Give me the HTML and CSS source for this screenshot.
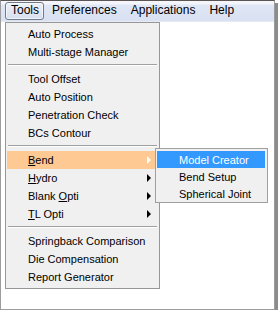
FILE: index.html
```html
<!DOCTYPE html>
<html lang="en">
<head>
  <meta charset="UTF-8" />
  <title>Tools menu</title>
  <link rel="stylesheet" href="styles.css">
</head>
<body>
  <div class="window">
    <div class="menubar">
      <div class="bar-item active">Tools</div>
      <div class="bar-item">Preferences</div>
      <div class="bar-item">Applications</div>
      <div class="bar-item">Help</div>
    </div>

    <div class="menu">
      <div class="item">Auto Process</div>
      <div class="item">Multi-stage Manager</div>
      <div class="sep"></div>
      <div class="item">Tool Offset</div>
      <div class="item">Auto Position</div>
      <div class="item">Penetration Check</div>
      <div class="item">BCs Contour</div>
      <div class="sep"></div>
      <div class="item sub open"><span><u>B</u>end</span><i class="arrow"></i></div>
      <div class="item sub"><span><u>H</u>ydro</span><i class="arrow"></i></div>
      <div class="item sub"><span>Blank <u>O</u>pti</span><i class="arrow"></i></div>
      <div class="item sub"><span><u>T</u>L Opti</span><i class="arrow"></i></div>
      <div class="sep"></div>
      <div class="item">Springback Comparison</div>
      <div class="item">Die Compensation</div>
      <div class="item">Report Generator</div>
    </div>

    <div class="submenu">
      <div class="item selected">Model Creator</div>
      <div class="item">Bend Setup</div>
      <div class="item">Spherical Joint</div>
    </div>
  </div>
</body>
</html>
```

FILE: styles.css
```css
body {
  margin: 0;
  background-color: #ffffff;
  font-family: "Liberation Sans", Arial, sans-serif;
  color: #000;
}
.window {
  position: relative;
  width: 275px;
  height: 310px;
  box-sizing: border-box;
  border: 1px solid #9c9c9c;
  border-top-color: #5b5555;
  background-color: #ffffff;
  box-shadow: 3px 3px 0 #8c8c8c;
}
.menubar {
  display: flex;
  align-items: center;
  gap: 2px;
  height: 20px;
  padding-left: 4px;
  border-bottom: 1px solid #e6eaf3;
  background: linear-gradient(#f5f6fa 0, #f3f5fa 3px, #dfe6f5 4px, #d9e1f2 100%);
  font-size: 12px;
}
.bar-item {
  padding: 1px 5px 2px;
  border: 1px solid transparent;
  border-radius: 3px;
  line-height: 13px;
}
.bar-item.active {
  padding: 1px 4px 2px 5px;
  border-color: #707a8a;
  background: linear-gradient(#eef1f7, #d6deee);
  box-shadow: inset 0 0 0 1px rgba(255, 255, 255, 0.6);
}
.menu,
.submenu {
  position: absolute;
  box-sizing: border-box;
  background-color: #f0f0f0;
  border: 1px solid #979797;
  font-size: 11px;
}
.menu {
  left: 4px;
  top: 21px;
  width: 155px;
  padding: 2px 1px;
}
.submenu {
  left: 154px;
  top: 147px;
  width: 113px;
  padding: 2px 2px 0 1px;
  border-color: #a0a0a0;
}
.item {
  display: flex;
  align-items: center;
  justify-content: space-between;
  height: 18px;
  padding: 0 7px 0 21px;
}
.submenu .item {
  height: 17px;
  padding-left: 22px;
}
.item.open {
  background-color: #ffc994;
}
.item.selected {
  background-color: #3399ff;
  color: #ffffff;
}
.sep {
  height: 9px;
  box-sizing: border-box;
  padding-top: 3px;
}
.sep::before {
  content: "";
  display: block;
  margin: 0 1px;
  border-top: 1px solid #a0a0a0;
  border-bottom: 1px solid #ffffff;
}
.arrow {
  width: 0;
  height: 0;
  border-left: 4px solid #000;
  border-top: 4px solid transparent;
  border-bottom: 4px solid transparent;
}
.item.open .arrow {
  border-left-color: #ffffff;
}
u {
  text-decoration-thickness: 1px;
  text-underline-offset: 1px;
}
```
